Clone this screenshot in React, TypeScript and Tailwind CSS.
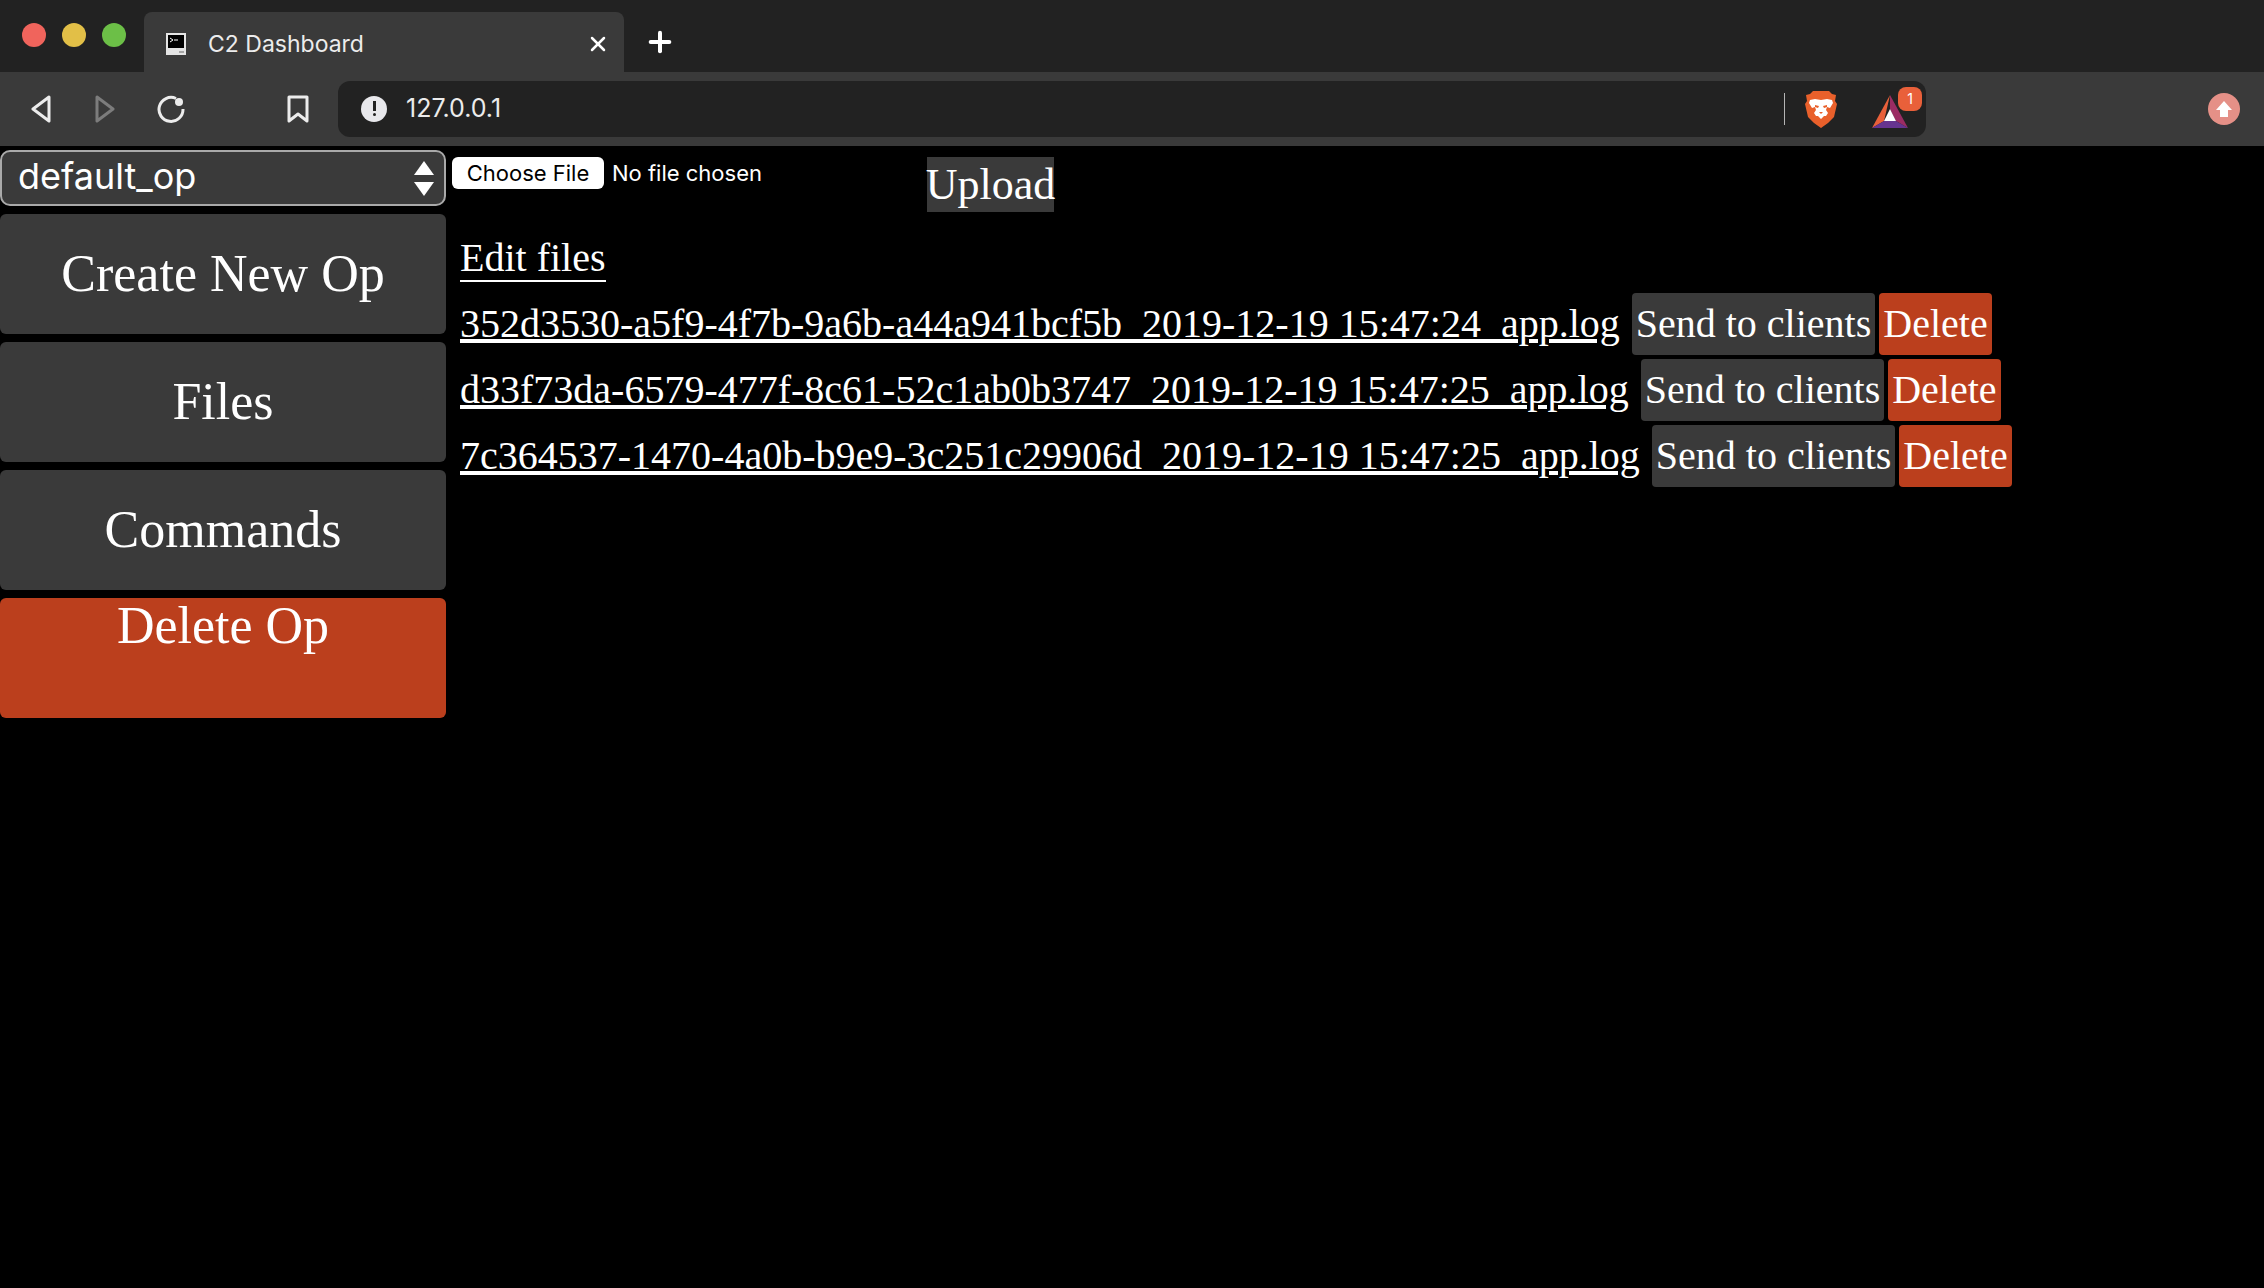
import { Plus, X } from 'lucide-react';

const files = [
  '352d3530-a5f9-4f7b-9a6b-a44a941bcf5b_2019-12-19 15:47:24_app.log',
  'd33f73da-6579-477f-8c61-52c1ab0b3747_2019-12-19 15:47:25_app.log',
  '7c364537-1470-4a0b-b9e9-3c251c29906d_2019-12-19 15:47:25_app.log',
];

const BraveLion = () => (
  <svg width="32" height="37" viewBox="0 0 32 37">
    <path d="M8 0h16l3 3 4 1-1 6 2 3-3 13-6 6-7 5-7-5-6-6L0 13l2-3-1-6 4-1z" fill="#e9602b" />
    <path d="M5 9l5-1 6 1 6-1 5 1 1 3-3 5-3-1-1 3 2 3-2 3h-2l-3 3-3-3H11l-2-3 2-3-1-3-3 1-3-5z" fill="#fff" />
    <path d="M10 14l4 1-1 2-3-1zM22 14l-4 1 1 2 3-1zM14 21h4l-2 2z" fill="#e9602b" />
  </svg>
);

const BatLogo = () => (
  <svg width="36" height="33" viewBox="0 0 36 33">
    <path d="M18 0L0 33l12-7z" fill="#e9603a" />
    <path d="M18 0v14l6 12 12 7z" fill="#9b2c63" />
    <path d="M0 33h36l-12-7H12z" fill="#66348f" />
    <path d="M18 14l-6 12h12z" fill="#fff" />
  </svg>
);

const Favicon = () => (
  <svg width="20" height="22" viewBox="0 0 20 22">
    <rect width="20" height="22" fill="#e4e4e4" />
    <rect x="2" y="2" width="16" height="13" fill="#000" />
    <path d="M4 5l3 2-3 2" fill="none" stroke="#fff" strokeWidth="1" />
    <path d="M8 7h4" stroke="#fff" strokeWidth="1" />
    <rect x="13" y="18" width="5" height="2" fill="#a5a5a5" />
  </svg>
);

const App = () => {
  return (
    <div className="flex h-[1288px] w-[2264px] flex-col overflow-hidden bg-black font-['Liberation_Serif',serif] text-white">
      <div className="flex h-[72px] items-end bg-[#222222] font-['Inter',sans-serif]">
        <div className="flex h-full w-[144px] items-start gap-4 pl-[22px] pt-[23px]">
          <span className="size-6 rounded-full bg-[#f0645c]" />
          <span className="size-6 rounded-full bg-[#e2bf47]" />
          <span className="size-6 rounded-full bg-[#6cbf47]" />
        </div>
        <div className="flex h-[60px] w-[480px] items-center rounded-t-lg bg-[#3a3a3a] pl-[22px] pr-[14px] pt-1">
          <Favicon />
          <span className="ml-[22px] flex-1 text-[23px] text-[#ececec]">C2 Dashboard</span>
          <X size={24} strokeWidth={2.5} className="text-white" />
        </div>
        <Plus size={32} strokeWidth={3} className="mb-[14px] ml-5 text-white" />
      </div>

      <div className="flex h-[74px] items-center bg-[#3a3a3a] font-['Inter',sans-serif]">
        <div className="flex w-[338px] items-center pl-[30px]">
          <svg width="22" height="28" viewBox="0 0 22 28" fill="none" stroke="#ececec" strokeWidth="3" strokeLinejoin="round">
            <path d="M19 2L3 14l16 12z" />
          </svg>
          <svg width="22" height="28" viewBox="0 0 22 28" fill="none" stroke="#7c7c7c" strokeWidth="3" strokeLinejoin="round" className="ml-[42px]">
            <path d="M3 2l16 12L3 26z" />
          </svg>
          <svg width="28" height="28" viewBox="0 0 28 28" fill="none" stroke="#ececec" strokeWidth="3" className="ml-[41px]">
            <path d="M19 3.5A12 12 0 1 0 26 14" />
            <circle cx="22" cy="7" r="4" fill="#ececec" stroke="none" />
          </svg>
          <svg width="22" height="28" viewBox="0 0 22 28" fill="none" stroke="#ececec" strokeWidth="3" strokeLinejoin="round" className="ml-[102px]">
            <path d="M2 2h18v24l-9-7-9 7z" />
          </svg>
        </div>
        <div className="flex h-14 w-[1588px] items-center rounded-xl bg-[#222222] pl-[23px]">
          <span className="relative size-[26px] rounded-full bg-[#e8e8ec]">
            <span className="absolute left-[11.5px] top-[5px] h-[10px] w-[3px] bg-[#222222]" />
            <span className="absolute left-[11.5px] top-[17px] size-[3px] rounded-full bg-[#222222]" />
          </span>
          <span className="ml-[19px] flex-1 text-[25px] text-[#ececec]">127.0.0.1</span>
          <span className="h-8 w-px bg-[#b5b5b5]" />
          <span className="ml-5">
            <BraveLion />
          </span>
          <span className="relative ml-[35px] mr-[18px] mt-1">
            <BatLogo />
            <span className="absolute -right-[14px] -top-[8px] flex size-6 items-center justify-center rounded-lg bg-[#e9603a] text-[14px] text-white">1</span>
          </span>
        </div>
        <div className="ml-[282px] flex size-8 items-center justify-center rounded-full bg-[#e59087]">
          <svg width="18" height="18" viewBox="0 0 18 18" fill="#fff">
            <path d="M9 1l8 9h-4v7H5v-7H1z" />
          </svg>
        </div>
      </div>

      <div className="flex flex-1 items-start">
        <div className="flex w-[446px] flex-col gap-2 pt-1">
          <div className="flex h-14 items-center justify-between rounded-[10px] border-2 border-[#a9a9a9] bg-[#3a3a3a] pl-4 pr-[10px] font-['Inter',sans-serif] text-[36px] leading-none">
            <span className="-mt-1">default_op</span>
            <span className="flex flex-col gap-[7px]">
              <span className="h-0 w-0 border-x-[10px] border-b-[14px] border-x-transparent border-b-white" />
              <span className="h-0 w-0 border-x-[10px] border-t-[14px] border-x-transparent border-t-white" />
            </span>
          </div>
          <div className="flex h-[120px] items-center justify-center rounded-md bg-[#3a3a3a] text-[52px]">Create New Op</div>
          <div className="flex h-[120px] items-center justify-center rounded-md bg-[#3a3a3a] text-[52px]">Files</div>
          <div className="flex h-[120px] items-center justify-center rounded-md bg-[#3a3a3a] text-[52px]">Commands</div>
          <div className="flex h-[120px] justify-center rounded-md bg-[#bb3f1d] text-[52px] leading-[56px]">Delete Op</div>
        </div>

        <div className="flex-1 pl-[6px] pt-[11px]">
          <div className="flex items-start">
            <div className="flex h-8 w-[475px] items-center font-['Inter',sans-serif] text-[22px]">
              <span className="flex h-8 w-[152px] items-center justify-center rounded-md bg-white text-black">Choose File</span>
              <span className="ml-2">No file chosen</span>
            </div>
            <div className="flex h-[55px] w-[127px] items-center justify-center bg-[#3a3a3a] text-[44px]">Upload</div>
          </div>
          <div className="ml-2 mt-6 w-fit border-b-2 border-white text-[40px] leading-[44px]">Edit files</div>
          <div className="ml-2 mt-[11px] flex flex-col gap-1">
            {files.map((file) => (
              <div key={file} className="flex h-[62px] items-center">
                <a className="mr-3 text-[40px] underline">{file}</a>
                <button type="button" className="mr-1 flex h-[62px] items-center rounded-sm bg-[#3a3a3a] px-1 text-[40px]">Send to clients</button>
                <button type="button" className="flex h-[62px] items-center rounded-sm bg-[#bb3f1d] px-1 text-[40px]">Delete</button>
              </div>
            ))}
          </div>
        </div>
      </div>
    </div>
  );
};

export default App;
